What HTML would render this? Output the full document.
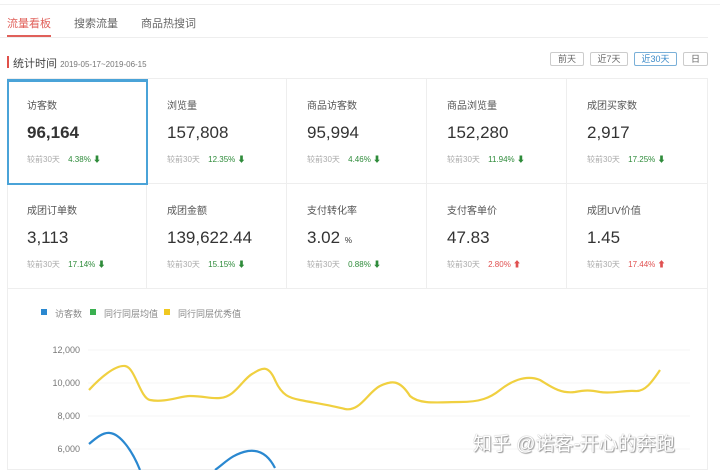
<!DOCTYPE html>
<html><head><meta charset="utf-8"><style>
*{margin:0;padding:0;box-sizing:border-box}
body{width:720px;height:470px;overflow:hidden;background:#fff;font-family:"Liberation Sans","Noto Sans CJK SC",sans-serif;color:#333;position:relative}
.a{position:absolute;white-space:nowrap}
.tab{font-size:11px;top:15px;color:#666}
.btn{top:52px;height:14px;border:1px solid #ccc;border-radius:2px;font-size:9px;color:#666;text-align:center;line-height:12px}
.cell{position:absolute;width:140px;height:105px;border-right:1px solid #eee;border-bottom:1px solid #eee}
.cell .l{position:absolute;left:20px;top:18px;font-size:10px;color:#555}
.cell .v{position:absolute;left:20px;top:44px;font-size:17px;color:#333}
.cell .c{position:absolute;left:20px;top:75px;font-size:8px;color:#aaa}
.g{color:#2e8b3a;margin-left:6px}.r{color:#e05050;margin-left:6px}
.ax{font-size:9px;color:#777;text-align:right;width:50px;left:30px}
</style></head><body>
<div class="a" style="left:0;right:0;top:4px;border-top:1px solid #f0f0f0"></div>
<div class="a tab" style="left:7px;color:#e0605a">流量看板</div>
<div class="a tab" style="left:74px">搜索流量</div>
<div class="a tab" style="left:141px">商品热搜词</div>
<div class="a" style="left:7px;top:35px;width:44px;height:2px;background:#e0605a"></div>
<div class="a" style="left:0;right:12px;top:37px;border-top:1px solid #eee"></div>
<div class="a" style="left:7px;top:56px;width:2px;height:12px;background:#e0504a"></div>
<div class="a" style="left:13px;top:55px;font-size:11px;color:#444">统计时间 <span style="font-size:8px;color:#777">2019-05-17~2019-06-15</span></div>
<div class="a btn" style="left:550px;width:34px">前天</div>
<div class="a btn" style="left:590px;width:38px">近7天</div>
<div class="a btn" style="left:634px;width:43px;border-color:#7ab0d8;color:#3a8ac8">近30天</div>
<div class="a btn" style="left:683px;width:25px">日</div>
<div class="a" style="left:7px;top:78px;width:701px;height:392px;border:1px solid #eee"></div>

<div class="cell" style="left:7px;top:79px"><div class="l">访客数</div><div class="v" style="font-weight:bold">96,164</div><div class="c">较前30天 <span class="g">4.38% ⬇</span></div></div>
<div class="cell" style="left:147px;top:79px"><div class="l">浏览量</div><div class="v">157,808</div><div class="c">较前30天 <span class="g">12.35% ⬇</span></div></div>
<div class="cell" style="left:287px;top:79px"><div class="l">商品访客数</div><div class="v">95,994</div><div class="c">较前30天 <span class="g">4.46% ⬇</span></div></div>
<div class="cell" style="left:427px;top:79px"><div class="l">商品浏览量</div><div class="v">152,280</div><div class="c">较前30天 <span class="g">11.94% ⬇</span></div></div>
<div class="cell" style="left:567px;top:79px;border-right:none"><div class="l">成团买家数</div><div class="v">2,917</div><div class="c">较前30天 <span class="g">17.25% ⬇</span></div></div>
<div class="cell" style="left:7px;top:184px"><div class="l">成团订单数</div><div class="v">3,113</div><div class="c">较前30天 <span class="g">17.14% ⬇</span></div></div>
<div class="cell" style="left:147px;top:184px"><div class="l">成团金额</div><div class="v">139,622.44</div><div class="c">较前30天 <span class="g">15.15% ⬇</span></div></div>
<div class="cell" style="left:287px;top:184px"><div class="l">支付转化率</div><div class="v">3.02 <span style="font-size:8px">%</span></div><div class="c">较前30天 <span class="g">0.88% ⬇</span></div></div>
<div class="cell" style="left:427px;top:184px"><div class="l">支付客单价</div><div class="v">47.83</div><div class="c">较前30天 <span class="r">2.80% ⬆</span></div></div>
<div class="cell" style="left:567px;top:184px;border-right:none"><div class="l">成团UV价值</div><div class="v">1.45</div><div class="c">较前30天 <span class="r">17.44% ⬆</span></div></div>
<div class="a" style="left:7px;top:79px;width:141px;height:106px;border:2px solid #4aa3d8;border-top-width:3px"></div>

<div class="a" style="left:41px;top:309px;width:6px;height:6px;background:#2a88d0"></div>
<div class="a" style="left:55px;top:307px;font-size:9px;color:#888">访客数</div>
<div class="a" style="left:90px;top:309px;width:6px;height:6px;background:#3ab050"></div>
<div class="a" style="left:104px;top:307px;font-size:9px;color:#888">同行同层均值</div>
<div class="a" style="left:164px;top:309px;width:6px;height:6px;background:#f0c820"></div>
<div class="a" style="left:178px;top:307px;font-size:9px;color:#888">同行同层优秀值</div>
<div class="a ax" style="top:345px">12,000</div>
<div class="a ax" style="top:378px">10,000</div>
<div class="a ax" style="top:411px">8,000</div>
<div class="a ax" style="top:444px">6,000</div>
<svg class="a" style="left:0;top:0" width="720" height="470">
<g stroke="#f5f5f5" stroke-width="1"><line x1="88" y1="350" x2="690" y2="350"/><line x1="88" y1="383" x2="690" y2="383"/><line x1="88" y1="416" x2="690" y2="416"/><line x1="88" y1="449" x2="690" y2="449"/></g>
<path d="M89,390 C100,378 115,365 125,366 C135,367 140,398 150,400 C165,403 180,396 190,396 C205,396 210,399 220,398 C235,397 242,380 252,374 C262,368 268,364 275,380 C282,396 290,398 300,400 C315,403 330,405 345,409 C360,412 368,392 380,386 C392,380 400,380 410,396 C420,405 440,402 460,402 C480,402 490,398 500,390 C510,382 525,374 540,380 C550,386 560,394 575,392 C585,390 590,390 600,392 C612,394 625,390 635,391 C645,392 652,382 660,370" fill="none" stroke="#f0d040" stroke-width="2.2"/>
<path d="M89,444 C96,438 103,432 110,433 C120,434 132,450 140,470 M215,470 C225,463 232,454 248,451 C262,449 270,458 275,468" fill="none" stroke="#2a88d0" stroke-width="2.2"/>
</svg>
<div class="a" style="left:473px;top:429px;font-size:19px;color:#fff;text-shadow:0 0 1px #888,1px 1px 1px #999">知乎 @诺客-开心的奔跑</div>
</body></html>
